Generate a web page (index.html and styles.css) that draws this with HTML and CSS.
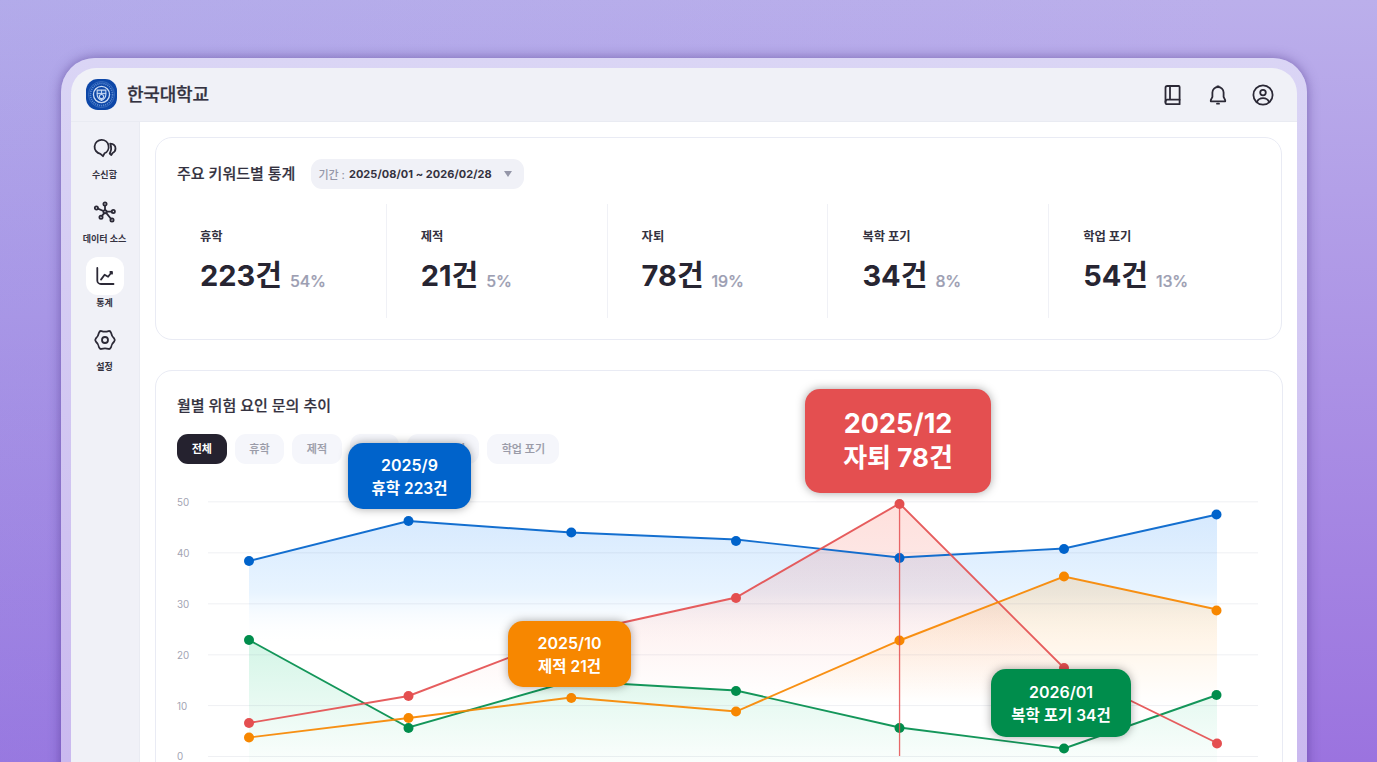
FILE: index.html
```html
<!DOCTYPE html>
<html lang="ko">
<head>
    <meta charset="UTF-8">
    <meta name="viewport" content="width=device-width, initial-scale=1.0">
    <title>한국대학교 통계</title>
    <link rel="stylesheet" href="styles.css">
</head>
<body>

    <div class="frame">
        <div class="app">

            <!-- 헤더 -->
            <header class="header">
                <svg class="logo" viewBox="0 0 30 30">
                    <rect width="30" height="30" rx="11.5" fill="#0d47a8"/>
                    <circle cx="15" cy="15" r="12.6" fill="none" stroke="#4f80cc" stroke-width="0.6"/>
                    <circle cx="15" cy="15" r="10.7" fill="none" stroke="#5c8ad0" stroke-width="1.7" stroke-dasharray="1.1 0.9"/>
                    <circle cx="15" cy="15" r="7.8" fill="#0d47a8" stroke="#c9daf3" stroke-width="1.3"/>
                    <path d="M10.8 10.8h8.4v4.500c0 2.800-1.900 4.300-4.200 5.400c-2.300-1.100-4.200-2.600-4.200-5.400z" fill="#2a62b8" stroke="#c9daf3" stroke-width="1.100"/>
                    <path d="M15 10.500v10M10.500 14h9" stroke="#c9daf3" stroke-width="0.900"/>
                    <circle cx="15" cy="17" r="2" fill="#0d47a8" stroke="#c9daf3" stroke-width="1"/>
                </svg>
                <h1 class="school">한국대학교</h1>
                <div class="header-icons">
                    <svg viewBox="0 0 24 24">
                        <path d="M6.300 3h11.300a1 1 0 0 1 1 1v17.200H6.300a1.800 1.800 0 0 1-1.800-1.800V4.800A1.800 1.800 0 0 1 6.300 3z"/>
                        <path d="M4.500 19a2 2 0 0 1 1.800-2.300h12.300M9 3v13.700"/>
                    </svg>
                    <svg viewBox="0 0 24 24">
                        <path d="M12 4a5.600 5.600 0 0 1 5.600 5.600v4.300l1.600 3.200v1.200H4.800v-1.200l1.600-3.200V9.600A5.600 5.600 0 0 1 12 4z"/>
                        <path d="M11.300 3.300h1.400M11 20.700h2"/>
                    </svg>
                    <svg viewBox="0 0 24 24">
                        <circle cx="12" cy="12" r="9.600"/>
                        <circle cx="12" cy="9.600" r="2.800"/>
                        <path d="M5.800 19.200c1.100-2.600 3.400-4 6.200-4s5.100 1.400 6.200 4"/>
                    </svg>
                </div>
            </header>

            <div class="body">

                <!-- 사이드 메뉴 -->
                <nav class="sidebar">
                    <a class="menu">
                        <span class="menu-icon">
                            <svg viewBox="0 0 24 24">
                                <path d="M8.700 3.900a7 7 0 0 1 2.800 13.400L10 20.200 7.400 17.800A7 7 0 0 1 8.700 3.900z"/>
                                <path d="M17.200 7.700c3.200.2 5.300 2.200 5.300 4.900 0 2-1.100 3.600-2.900 4.400l-1.300 2-1.600-1.500c1.400-2.500 2-6.200.5-9.800z"/>
                            </svg>
                        </span>
                        수신함
                    </a>
                    <a class="menu">
                        <span class="menu-icon">
                            <svg viewBox="0 0 24 24">
                                <path d="M12 5.600v4.500M4.900 8.700l5.500 2.300M13.600 11.600h5M11.200 13.100l-2.200 2.800M13.200 12.900l4.700 5.900"/>
                                <circle cx="12" cy="11.700" r="1.600"/>
                                <circle cx="12" cy="4" r="1.600"/>
                                <circle cx="3.400" cy="8" r="1.600"/>
                                <circle cx="20.300" cy="11.500" r="1.600"/>
                                <circle cx="8" cy="17.300" r="1.600"/>
                                <circle cx="19" cy="20" r="1.600"/>
                            </svg>
                        </span>
                        데이터 소스
                    </a>
                    <a class="menu active">
                        <span class="menu-icon">
                            <svg viewBox="0 0 24 24">
                                <path d="M4.300 4v12.400a3.600 3.600 0 0 0 3.600 3.600h12.600"/>
                                <path d="M8 15.600l3.600-4.900 3.500 2 3.700-4.700M17.300 8h1.700v1.700"/>
                            </svg>
                        </span>
                        통계
                    </a>
                    <a class="menu">
                        <span class="menu-icon">
                            <svg viewBox="0 0 24 24">
                                <path d="M21.200 10.500Q22.400 12 21.200 13.500Q18.700 15.600 18 19.300Q17.300 21.300 15.500 20.900Q12 19.800 8.500 20.900Q6.700 21.300 6 19.300Q5.300 15.600 2.800 13.500Q1.600 12 2.800 10.500Q5.300 8.400 6 4.700Q6.700 2.700 8.500 3.100Q12 4.200 15.500 3.100Q17.300 2.700 18 4.700Q18.700 8.400 21.200 10.500Z"/>
                                <circle cx="12" cy="12" r="3"/>
                            </svg>
                        </span>
                        설정
                    </a>
                </nav>

                <main class="content">

                    <!-- 주요 키워드별 통계 -->
                    <section class="card summary">
                        <div class="card-head">
                            <h2>주요 키워드별 통계</h2>
                            <div class="period">
                                <span class="period-label">기간 :</span>
                                <span class="period-value">2025/08/01 ~ 2026/02/28</span>
                                <span class="caret"></span>
                            </div>
                        </div>
                        <div class="stats">
                            <div class="stat">
                                <h3>휴학</h3>
                                <p><strong>223건</strong><span>54%</span></p>
                            </div>
                            <div class="stat">
                                <h3>제적</h3>
                                <p><strong>21건</strong><span>5%</span></p>
                            </div>
                            <div class="stat">
                                <h3>자퇴</h3>
                                <p><strong>78건</strong><span>19%</span></p>
                            </div>
                            <div class="stat">
                                <h3>복학 포기</h3>
                                <p><strong>34건</strong><span>8%</span></p>
                            </div>
                            <div class="stat">
                                <h3>학업 포기</h3>
                                <p><strong>54건</strong><span>13%</span></p>
                            </div>
                        </div>
                    </section>

                    <!-- 월별 위험 요인 문의 추이 -->
                    <section class="card trend">
                        <h2>월별 위험 요인 문의 추이</h2>
                        <div class="tabs">
                            <button class="tab selected">전체</button>
                            <button class="tab">휴학</button>
                            <button class="tab">제적</button>
                            <button class="tab">자퇴</button>
                            <button class="tab wide">복학 포기</button>
                            <button class="tab wide">학업 포기</button>
                        </div>

                        <svg class="chart" viewBox="156 480 1125 300">
                            <defs>
                                <linearGradient id="fillBlue" gradientUnits="userSpaceOnUse" x1="0" y1="514" x2="0" y2="645">
                                    <stop offset="0" stop-color="#d6e9fe"/>
                                    <stop offset="0.600" stop-color="#e8f4ff"/>
                                    <stop offset="1" stop-color="#fff" stop-opacity="0"/>
                                </linearGradient>
                                <linearGradient id="fillRed" gradientUnits="userSpaceOnUse" x1="0" y1="503" x2="0" y2="700">
                                    <stop offset="0" stop-color="#ff5a46" stop-opacity="0.190"/>
                                    <stop offset="0.350" stop-color="#f05a50" stop-opacity="0.140"/>
                                    <stop offset="1" stop-color="#fa5a50" stop-opacity="0"/>
                                </linearGradient>
                                <linearGradient id="fillOrange" gradientUnits="userSpaceOnUse" x1="0" y1="576" x2="0" y2="705">
                                    <stop offset="0" stop-color="#ff9a1a" stop-opacity="0.190"/>
                                    <stop offset="1" stop-color="#ff9a1a" stop-opacity="0"/>
                                </linearGradient>
                                <linearGradient id="fillGreen" gradientUnits="userSpaceOnUse" x1="0" y1="640" x2="0" y2="762">
                                    <stop offset="0" stop-color="#10c878" stop-opacity="0.180"/>
                                    <stop offset="1" stop-color="#10c878" stop-opacity="0.020"/>
                                </linearGradient>
                            </defs>

                            <path fill="url(#fillBlue)" d="M249 561L408.500 521L571 532.500L736 540.500L899.500 557.500L1064 549L1217 514.500V762H249z"/>
                            <path fill="url(#fillRed)" d="M249 723L408.500 696L571 634L736 597.500L899.500 503.500L1064 668L1217 743V762H249z"/>
                            <path fill="url(#fillOrange)" d="M249 737.500L408.500 718L571 697.500L736 711.500L899.500 640.500L1064 576.500L1217 609.500V762H249z"/>
                            <path fill="url(#fillGreen)" d="M249 640L408.500 727.500L571 681L736 690.500L899.500 727.500L1064 748.500L1217 695V762H249z"/>

                            <path class="grid" d="M208 501.800H1258M208 552.800H1258M208 603.800H1258M208 654.800H1258M208 705.600H1258M208 756.500H1258"/>
                            <g class="axis">
                                <text x="177" y="505.500">50</text>
                                <text x="177" y="556.500">40</text>
                                <text x="177" y="607.500">30</text>
                                <text x="177" y="658.500">20</text>
                                <text x="177" y="709.500">10</text>
                                <text x="177" y="760.300">0</text>
                            </g>

                            <g class="series blue">
                                <path d="M249 561L408.500 521L571 532.500L736 539.500L899.500 557.500L1064 548.500L1217 514.500"/>
                                <circle cx="249" cy="561" r="5"/><circle cx="408.500" cy="521" r="5"/><circle cx="571.300" cy="532.500" r="5"/><circle cx="736" cy="541" r="5"/><circle cx="899.500" cy="558" r="5"/><circle cx="1064" cy="549" r="5"/><circle cx="1216.500" cy="514.500" r="5"/>
                            </g>
                            <g class="series green">
                                <path d="M249 640L408.500 727.500L571 681L736 690.500L899.500 727.500L1064 748.500L1217 695"/>
                                <circle cx="249" cy="640" r="5"/><circle cx="736" cy="691" r="5"/><circle cx="899.500" cy="728" r="5"/><circle cx="1064" cy="748.500" r="5"/><circle cx="1216.500" cy="695" r="5"/>
                            </g>
                            <g class="series red">
                                <path d="M249 723L408.500 696L571 634L736 597.500L899.500 503.500L1064 668L1217 743"/>
                                <circle cx="249" cy="723" r="5"/><circle cx="408.500" cy="696" r="5"/><circle cx="736" cy="598" r="5"/><circle cx="899.500" cy="504" r="5"/><circle cx="1064" cy="668" r="5"/><circle cx="1217" cy="743.500" r="5"/>
                            </g>
                            <g class="series orange">
                                <path d="M249 737.500L408.500 718L571 697.500L736 711.500L899.500 640.500L1064 576.500L1217 609.500"/>
                                <circle cx="249" cy="737.500" r="5"/><circle cx="408.500" cy="718" r="5"/><circle cx="571.300" cy="698" r="5"/><circle cx="736" cy="711.500" r="5"/><circle cx="899.500" cy="640.500" r="5"/><circle cx="1064" cy="576.500" r="5"/><circle cx="1216.500" cy="610.500" r="5"/>
                            </g>
                            <circle cx="408.500" cy="728" r="5" fill="#008d4c"/>
                            <rect class="marker" x="898.900" y="504" width="1.300" height="252"/>
                        </svg>

                        <!-- 말풍선 -->
                        <div class="tip tip-blue">2025/9<p>휴학 223건</p></div>
                        <div class="tip tip-orange">2025/10<p>제적 21건</p></div>
                        <div class="tip tip-red">2025/12<p>자퇴 78건</p></div>
                        <div class="tip tip-green">2026/01<p>복학 포기 34건</p></div>
                    </section>
                </main>
            </div>
        </div>
    </div>

</body>
</html>
```
FILE: styles.css
```css
* {
    box-sizing: border-box;
}

body {
    margin: 0;
    height: 762px;
    overflow: hidden;
    font-family: Inter, 'Noto Sans CJK KR', sans-serif;
    color: #272532;
    background:
        linear-gradient(90deg, rgba(135, 150, 230, 0.16), rgba(135, 150, 230, 0) 90%),
        linear-gradient(#bbafeb, #9b73df);
}

h1, h2, h3, p {
    margin: 0;
}

.frame {
    margin: 58px 70px 0 61px;
    height: 740px;
    padding: 10px 10px 0;
    border-radius: 34px 34px 0 0;
    background: linear-gradient(#dad5f5, #cab9ef 705px);
    box-shadow: 0 0 12px rgba(60, 35, 120, 0.5);
}

.app {
    height: 730px;
    border-radius: 25px 25px 0 0;
    overflow: hidden;
    background-color: #f0f1f7;
}

/* 헤더 */
.header {
    display: flex;
    align-items: center;
    height: 54px;
    padding: 0 22px 0 15px;
    border-bottom: 1px solid #e9ebf2;
}

.logo {
    width: 31px;
    height: 31px;
}

.school {
    margin: -3px 0 0 10px;
    font-size: 18px;
    font-weight: 500;
    letter-spacing: -0.2px;
    -webkit-text-stroke: 0.25px #343240;
    color: #343240;
}

.header-icons {
    display: flex;
    gap: 21px;
    margin-left: auto;
}

.header-icons svg,
.menu-icon svg {
    width: 24px;
    height: 24px;
    fill: none;
    stroke: #2b2936;
    stroke-width: 1.8;
    stroke-linecap: round;
    stroke-linejoin: round;
}

.body {
    display: flex;
    height: 675px;
}

/* 사이드 메뉴 */
.sidebar {
    width: 69px;
    padding-top: 7px;
    border-right: 1px solid #e9ebf2;
}

.menu {
    display: flex;
    flex-direction: column;
    align-items: center;
    height: 64px;
    padding-right: 1px;
    font-size: 9px;
    font-weight: 700;
    line-height: 14px;
    white-space: nowrap;
    color: #34323f;
}

.menu-icon {
    display: flex;
    align-items: center;
    justify-content: center;
    width: 38px;
    height: 38px;
    margin-bottom: 1px;
    border-radius: 12px;
}

.active .menu-icon {
    background-color: #fff;
}

.content {
    flex: 1;
    padding: 15px 14px 0 15px;
    background-color: #fff;
}

.card {
    border: 1px solid #e9ebf4;
    border-radius: 17px;
}

.card h2 {
    font-size: 15px;
    font-weight: 500;
    line-height: 20px;
    -webkit-text-stroke: 0.2px #343240;
    color: #343240;
}

.summary {
    height: 203px;
    margin-right: 1px;
    padding: 21px 10px 0;
}

.card-head {
    display: flex;
    align-items: center;
    height: 30px;
    padding-left: 11px;
}

.period {
    display: flex;
    align-items: center;
    width: 213px;
    height: 30px;
    margin-left: 16px;
    padding: 0 12px 0 7px;
    border-radius: 11px;
    background-color: #f0f1f7;
    font-size: 11px;
    white-space: nowrap;
}

.period-label {
    color: #9496a8;
    font-weight: 500;
}

.period-value {
    margin-left: 4px;
    font-weight: 700;
    letter-spacing: 0.05px;
    color: #343240;
}

.caret {
    margin-left: auto;
    border: 4px solid transparent;
    border-top: 6px solid #9496a8;
    border-bottom: 0;
}

.stats {
    display: grid;
    grid-template-columns: repeat(5, 220.8px);
    margin-top: 15px;
}

.stat {
    height: 114px;
    padding: 23px 0 0 34px;
    border-right: 1px solid #f0f1f6;
}

.stat:last-child {
    border-right: 0;
}

.stat h3 {
    font-size: 12.3px;
    font-weight: 700;
    line-height: 20px;
    color: #343240;
}

.stat p {
    display: flex;
    align-items: flex-end;
    margin-top: 9px;
    line-height: 40px;
}

.stat strong {
    font-size: 29px;
    font-weight: 700;
}

.stat span {
    margin-left: 8px;
    font-size: 16px;
    font-weight: 500;
    line-height: 29px;
    letter-spacing: -0.2px;
    -webkit-text-stroke: 0.2px #9c9eb2;
    color: #9c9eb2;
}

/* 추이 차트 */
.trend {
    position: relative;
    height: 430px;
    margin-top: 30px;
    padding-top: 25px;
}

.trend h2 {
    padding-left: 21px;
}

.tabs {
    display: flex;
    gap: 8px;
    margin: 18px 0 0 21px;
}

.tab {
    width: 49.6px;
    height: 30px;
    padding: 0 0 2px;
    border: none;
    border-radius: 11px;
    background-color: #f5f6fb;
    color: #9a9ba8;
    font-family: inherit;
    font-size: 11px;
    font-weight: 500;
    -webkit-text-stroke: 0.2px #9a9ba8;
}

.tab.wide {
    width: 72px;
}

.tab.selected {
    background-color: #25222f;
    color: #fff;
    font-weight: 700;
    -webkit-text-stroke: 0;
}

.chart {
    display: block;
    width: 1125px;
    height: 300px;
    margin-top: 16px;
}

.grid {
    fill: none;
    stroke: #6e7896;
    stroke-opacity: 0.11;
}

.axis text {
    font-size: 9.8px;
    fill: #a3a4b3;
}

.series path {
    fill: none;
    stroke: currentColor;
    stroke-width: 1.9;
    stroke-opacity: 0.92;
}

.series circle {
    fill: currentColor;
}

.blue {
    color: #0063cb;
}

.green {
    color: #008d4c;
}

.red {
    color: #e44f50;
}

.orange {
    color: #f78700;
}

.marker {
    fill: #e44f50;
    fill-opacity: 0.85;
}

/* 말풍선 */
.tip {
    position: absolute;
    border-radius: 15px;
    color: #fff;
    font-size: 16px;
    font-weight: 600;
    line-height: 23px;
    text-align: center;
    white-space: nowrap;
    box-shadow: 0 0 10px rgba(0, 0, 0, 0.35);
}

.tip p {
    font-size: 15.5px;
}

.tip-blue {
    left: 192px;
    top: 72px;
    width: 123px;
    height: 66px;
    padding-top: 11px;
    background-color: #0063cb;
}

.tip-orange {
    left: 352px;
    top: 250px;
    width: 123px;
    height: 66px;
    padding-top: 11px;
    background-color: #f78700;
}

.tip-red {
    left: 649px;
    top: 18px;
    width: 186px;
    height: 104px;
    padding-top: 18px;
    background-color: #e44f50;
    font-size: 27px;
    font-weight: 700;
    line-height: 34px;
}

.tip-red p {
    font-size: 26px;
}

.tip-green {
    left: 835px;
    top: 298px;
    width: 140px;
    height: 68px;
    padding-top: 12px;
    background-color: #008d4c;
}
```
